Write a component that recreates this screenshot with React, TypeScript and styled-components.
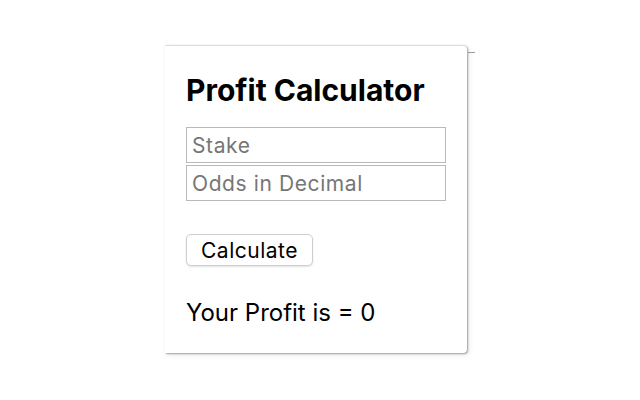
import React, { useState } from 'react';
import styled, { createGlobalStyle } from 'styled-components';

const GlobalStyle = createGlobalStyle`
  html, body {
    margin: 0;
    padding: 0;
    background: #ffffff;
    font-family: Inter, "Liberation Sans", Arial, sans-serif;
  }
`;

const Page = styled.div`
  width: 640px;
  height: 400px;
  box-sizing: border-box;
  padding: 45px 0 0 165px;
`;

const Popup = styled.div`
  position: relative;
  width: 302px;
  height: 308px;
  box-sizing: border-box;
  padding: 27px 21px 0 21px;
  background: #ffffff;
  border-top: 1px solid #dcdcdc;
  border-radius: 0 4px 4px 0;
  box-shadow: 1px 1px 2px rgba(0, 0, 0, 0.35), 2px 2px 6px rgba(0, 0, 0, 0.08);

  &::after {
    content: '';
    position: absolute;
    top: 6px;
    right: -8px;
    width: 7px;
    height: 1px;
    background: #9a9a9a;
  }
`;

const Title = styled.h1`
  margin: 0 0 20px 0;
  font-size: 30px;
  line-height: 34px;
  font-weight: 700;
  color: #000000;
`;

const Field = styled.input`
  display: block;
  width: 260px;
  height: 36px;
  box-sizing: border-box;
  margin: 0 0 2px 0;
  padding: 0 5px;
  border: 1px solid #b9b9b9;
  border-radius: 0;
  font-family: Inter, "Liberation Sans", Arial, sans-serif;
  font-size: 21px;
  letter-spacing: 0.6px;
  color: #000;
  outline: none;

  &::placeholder {
    color: #767676;
  }
`;

const Button = styled.button`
  margin-top: 31px;
  width: 127px;
  height: 32px;
  padding: 0;
  background: #ffffff;
  border: 1px solid #cfcfcf;
  border-radius: 5px;
  box-shadow: 0 1px 2px rgba(0, 0, 0, 0.12);
  font-family: Inter, "Liberation Sans", Arial, sans-serif;
  font-size: 21px;
  letter-spacing: 0.5px;
  color: #000;
`;

const Result = styled.p`
  margin: 33px 0 0 0;
  font-size: 24px;
  line-height: 28px;
  color: #000;
`;

export default function App() {
  const [stake, setStake] = useState('');
  const [odds, setOdds] = useState('');
  const [profit, setProfit] = useState(0);

  const calculate = () => {
    const s = parseFloat(stake);
    const o = parseFloat(odds);
    setProfit(isNaN(s) || isNaN(o) ? 0 : s * o - s);
  };

  return (
    <>
      <GlobalStyle />
      <Page>
        <Popup>
          <Title>Profit Calculator</Title>
          <Field placeholder="Stake" value={stake} onChange={e => setStake(e.target.value)} />
          <Field placeholder="Odds in Decimal" value={odds} onChange={e => setOdds(e.target.value)} />
          <Button onClick={calculate}>Calculate</Button>
          <Result>Your Profit is = {profit}</Result>
        </Popup>
      </Page>
    </>
  );
}
